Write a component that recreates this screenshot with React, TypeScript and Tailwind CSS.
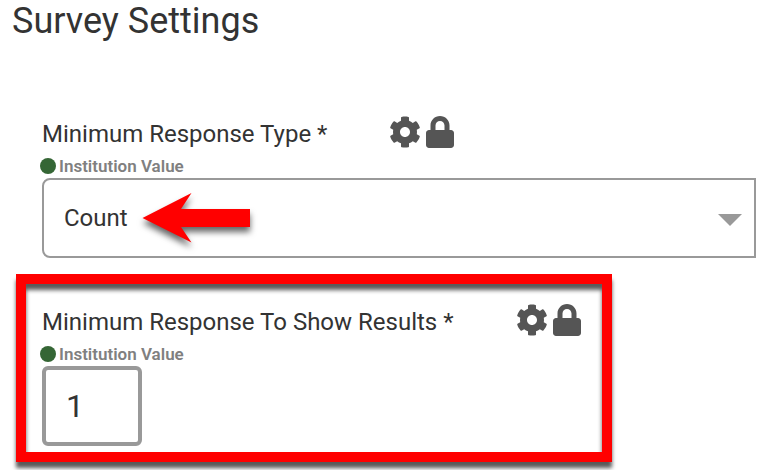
import { useState, type ReactNode } from 'react';
import { FaCog, FaLock } from 'react-icons/fa';

interface SettingFieldProps {
  id: string;
  label: string;
  children: ReactNode;
}

function SettingField({ id, label, children }: SettingFieldProps) {
  return (
    <div>
      <div className="flex items-start gap-[62px]">
        <label htmlFor={id} className="pt-0.5 text-2xl leading-8">
          {label} *
        </label>
        <div className="flex gap-[5px] text-[#555]">
          <button type="button" aria-label={`${label} options`}>
            <FaCog className="h-8 w-8" />
          </button>
          <button type="button" aria-label={`${label} lock`}>
            <FaLock className="h-8 w-7" />
          </button>
        </div>
      </div>
      <div className="-ml-0.5 flex h-7 items-end gap-[3px] text-[17px] leading-6 font-semibold text-[#808080]">
        <span className="mb-1 h-4 w-4 rounded-full bg-[#356635]" />
        Institution Value
      </div>
      {children}
    </div>
  );
}

function PointerArrow() {
  return (
    <svg
      viewBox="0 0 108 50"
      className="pointer-events-none absolute top-[15px] left-[100px] h-[50px] w-[108px] overflow-visible drop-shadow-[0_5px_3px_rgba(0,0,0,0.6)]"
      aria-hidden="true"
    >
      <path d="M0.5 25 L49.5 0 L39 16 H108 V34 H39 L49.5 49.5 Z" fill="#f00" />
    </svg>
  );
}

export default function App() {
  const [responseType, setResponseType] = useState('Count');
  const [minimum, setMinimum] = useState('1');

  return (
    <main className="bg-white pb-2 font-[Roboto,sans-serif] text-[#333]">
      <h1 className="pl-3 text-4xl leading-[42px]">Survey Settings</h1>

      <div className="pt-[74px] pr-[18px] pl-[42px]">
        <SettingField id="response-type" label="Minimum Response Type">
          <div className="relative">
            <select
              id="response-type"
              value={responseType}
              onChange={(e) => setResponseType(e.target.value)}
              className="h-20 w-full appearance-none rounded-l-lg border-2 border-[#999] bg-white px-5 text-2xl"
            >
              <option>Count</option>
              <option>Percentage</option>
            </select>
            <svg
              viewBox="0 0 24 12"
              className="pointer-events-none absolute top-9 right-3.5 h-3 w-6"
              aria-hidden="true"
            >
              <path d="M0 0 H24 L12 12 Z" fill="#999" />
            </svg>
            <PointerArrow />
          </div>
        </SettingField>
      </div>

      <section className="mt-4 ml-4 w-fit border-10 border-[#f00] pt-5 pr-[21px] pb-1.5 pl-4 shadow-[0_6px_4px_rgba(0,0,0,0.65),inset_0_6px_4px_rgba(0,0,0,0.65)]">
        <SettingField id="minimum-results" label="Minimum Response To Show Results">
          <input
            id="minimum-results"
            type="text"
            inputMode="numeric"
            value={minimum}
            onChange={(e) => setMinimum(e.target.value)}
            className="block h-20 w-[100px] rounded-md border-4 border-[#999] bg-white px-5 text-[32px]"
          />
        </SettingField>
      </section>
    </main>
  );
}
